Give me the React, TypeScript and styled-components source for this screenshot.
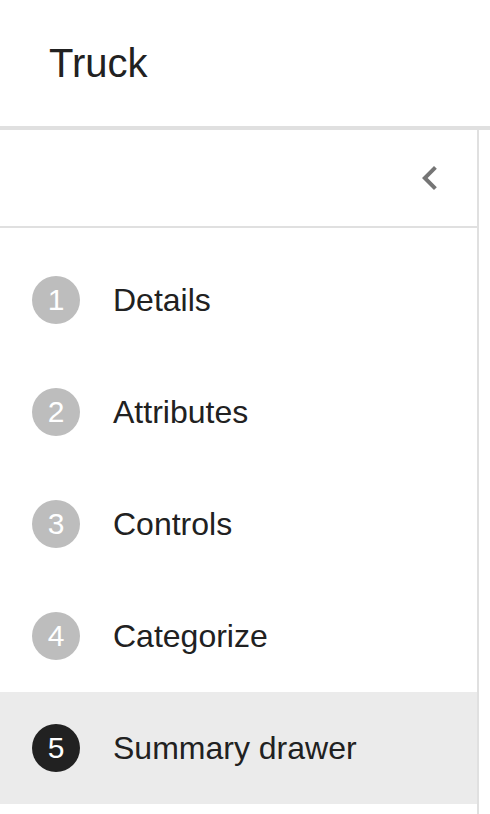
import * as React from "react";
import styled, { createGlobalStyle } from "styled-components";

const GlobalStyle = createGlobalStyle`
  html, body {
    margin: 0;
    padding: 0;
    background: #ffffff;
  }
  body {
    font-family: "Liberation Sans", Arial, sans-serif;
    color: #212121;
  }
`;

const StyledPage = styled.div`
  min-height: 100vh;
  display: flex;
  flex-direction: column;
`;

const StyledHeader = styled.header`
  height: 126px;
  display: flex;
  align-items: center;
  padding-left: 49px;
  border-bottom: 4px solid #e0e0e0;
  font-size: 40px;
  color: #212121;
`;

const StyledDrawer = styled.nav`
  flex: 1;
  width: 477px;
  border-right: 2px solid #e0e0e0;
  display: flex;
  flex-direction: column;
`;

const StyledToolbar = styled.div`
  height: 96px;
  display: flex;
  align-items: center;
  justify-content: flex-end;
  padding-right: 23px;
  border-bottom: 2px solid #e0e0e0;
`;

const StyledIconButton = styled.button`
  width: 48px;
  height: 48px;
  padding: 0;
  border: none;
  background: transparent;
  display: flex;
  align-items: center;
  justify-content: center;
  cursor: pointer;
`;

const StyledSteps = styled.ol`
  list-style: none;
  margin: 0;
  padding: 16px 0 0;
`;

const StyledStep = styled.li<{ $active?: boolean }>`
  height: 112px;
  display: flex;
  align-items: center;
  padding-left: 32px;
  gap: 33px;
  background: ${(p) => (p.$active ? "#ebebeb" : "transparent")};
`;

const StyledBadge = styled.span<{ $active?: boolean }>`
  width: 48px;
  height: 48px;
  border-radius: 50%;
  flex-shrink: 0;
  display: flex;
  align-items: center;
  justify-content: center;
  background: ${(p) => (p.$active ? "#212121" : "#bdbdbd")};
  color: #ffffff;
  font-size: 30px;
`;

const StyledLabel = styled.span`
  font-size: 32px;
  color: #212121;
`;

const steps = ["Details", "Attributes", "Controls", "Categorize", "Summary drawer"];
const activeStep = 4;

export default function App() {
  return (
    <StyledPage>
      <GlobalStyle />
      <StyledHeader>Truck</StyledHeader>
      <StyledDrawer>
        <StyledToolbar>
          <StyledIconButton type={"button"} aria-label={"Collapse"}>
            <svg width="48" height="48" viewBox="0 0 24 24">
              <path
                d="M15.41 7.41L14 6l-6 6 6 6 1.41-1.41L10.83 12z"
                fill="#757575"
              />
            </svg>
          </StyledIconButton>
        </StyledToolbar>
        <StyledSteps>
          {steps.map((label, i) => (
            <StyledStep key={label} $active={i === activeStep}>
              <StyledBadge $active={i === activeStep}>{i + 1}</StyledBadge>
              <StyledLabel>{label}</StyledLabel>
            </StyledStep>
          ))}
        </StyledSteps>
      </StyledDrawer>
    </StyledPage>
  );
}
